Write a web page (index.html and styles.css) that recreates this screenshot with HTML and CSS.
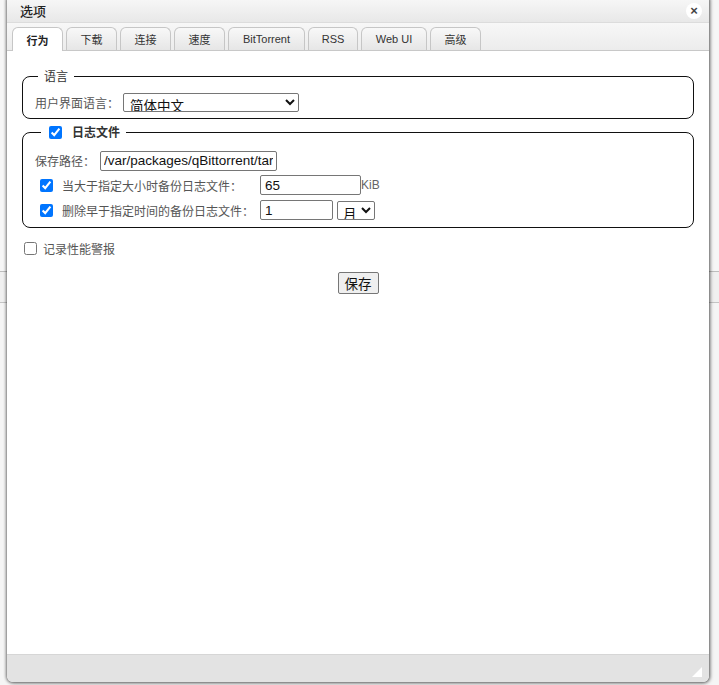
FILE: index.html
```html
<!DOCTYPE html>
<html lang="zh">
<head>
<meta charset="utf-8">
<title>选项</title>
<link rel="stylesheet" href="styles.css">
</head>
<body>
<div class="backdrop">
  <div class="bg-top"></div>
  <div class="bg-band"></div>
  <div class="bg-rest"></div>
</div>
<div class="window">
  <div class="titlebar">
    <span class="title">选项</span>
    <span class="close">×</span>
  </div>
  <div class="tabbar">
    <span class="tab active">行为</span>
    <span class="tab">下载</span>
    <span class="tab">连接</span>
    <span class="tab">速度</span>
    <span class="tab">BitTorrent</span>
    <span class="tab">RSS</span>
    <span class="tab">Web UI</span>
    <span class="tab">高级</span>
  </div>
  <div class="content">
    <fieldset class="group">
      <legend class="legend">语言</legend>
      <div class="row">
        <label class="lbl">用户界面语言：</label>
        <select class="sel-lang"><option>简体中文</option></select>
      </div>
    </fieldset>
    <fieldset class="group group-log">
      <legend class="legend legend-check"><input type="checkbox" checked class="cb"><span class="bold">日志文件</span></legend>
      <div class="row">
        <label class="lbl">保存路径：</label>
        <input class="inp-path" type="text" value="/var/packages/qBittorrent/target/qBittorrent_conf/data/logs">
      </div>
      <div class="row row-sub">
        <input type="checkbox" checked class="cb">
        <label class="lbl lbl-sub">当大于指定大小时备份日志文件：</label>
        <input class="inp-num" type="text" value="65"><span class="unit">KiB</span>
      </div>
      <div class="row row-sub">
        <input type="checkbox" checked class="cb">
        <label class="lbl lbl-sub">删除早于指定时间的备份日志文件：</label>
        <input class="inp-num2" type="text" value="1">
        <select class="sel-month"><option>月</option></select>
      </div>
    </fieldset>
    <div class="perf">
      <input type="checkbox" class="cb cb-perf">
      <label class="lbl">记录性能警报</label>
    </div>
    <div class="actions">
      <button class="save">保存</button>
    </div>
  </div>
  <div class="footer"><span class="grip"></span></div>
</div>
</body>
</html>
```
FILE: styles.css
```css
html, body {
  margin: 0;
  padding: 0;
  width: 719px;
  height: 685px;
  overflow: hidden;
  font-family: "Noto Sans CJK SC", "Liberation Sans", sans-serif;
}
.backdrop {
  width: 719px;
  height: 685px;
  background: #f4f4f4;
}
.bg-top {
  height: 271px;
  background: #f6f6f6;
  border-bottom: 1px solid #bdbdbd;
}
.bg-band {
  height: 30px;
  background: #f0f0f0;
  border-bottom: 1px solid #c4c4c4;
  box-shadow: 0 2px 0 #dcdcdc;
}
.bg-rest {
  height: 382px;
  background: #f5f5f5;
}
.window {
  position: absolute;
  left: 7px;
  top: -6px;
  width: 702px;
  height: 688px;
  background: #fff;
  border-radius: 6px;
  box-shadow: 0 0 3px 1px rgba(0,0,0,0.45), 1px 1px 4px rgba(0,0,0,0.3);
  display: flex;
  flex-direction: column;
  overflow: hidden;
}
.titlebar {
  height: 28px;
  flex: none;
  background: linear-gradient(#fafafa, #e8e8e8);
  display: flex;
  align-items: center;
  justify-content: space-between;
  padding: 4px 8px 0 13px;
  box-sizing: border-box;
}
.title {
  font-size: 13px;
  color: #222;
  font-weight: 500;
}
.close {
  width: 16px;
  height: 16px;
  border-radius: 50%;
  background: #fff;
  color: #444;
  font: bold 13px/16px "Liberation Sans", sans-serif;
  text-align: center;
  margin-top: 1px;
  margin-right: -1px;
}
.tabbar {
  flex: none;
  height: 29px;
  box-sizing: border-box;
  background: linear-gradient(#f7f7f7, #ececec);
  border-top: 1px solid #dcdcdc;
  border-bottom: 1px solid #c8c8c8;
  display: flex;
  align-items: flex-end;
  gap: 3px;
  padding: 0 0 0 5px;
}
.tab {
  height: 23px;
  box-sizing: border-box;
  border: 1px solid #c6c6c6;
  border-bottom: none;
  border-radius: 6px 6px 0 0;
  background: linear-gradient(#f8f8f8, #e6e6e6);
  font-size: 11px;
  color: #333;
  display: flex;
  align-items: center;
  justify-content: center;
  width: 51px;
}
.tab:nth-child(5) { width: 77px; font-family: "Liberation Sans", sans-serif; }
.tab:nth-child(6) { width: 50px; font-family: "Liberation Sans", sans-serif; }
.tab:nth-child(7) { width: 66px; font-family: "Liberation Sans", sans-serif; }
.tab.active {
  background: #fff;
  height: 24px;
  margin-bottom: -1px;
  font-weight: bold;
  color: #222;
}
.content {
  flex: 1;
  padding: 17px 15px 0 15px;
  background: #fff;
}
.group {
  margin: 0 0 5px 0;
  border: 1px solid #111;
  border-radius: 8px;
  padding: 6px 12px 4px 12px;
}
.legend {
  font-size: 12px;
  color: #333;
  padding: 0 6px;
  margin-left: 3px;
  line-height: 16px;
}
.legend-check {
  display: flex;
  align-items: center;
  gap: 10px;
  margin-left: 6px;
  padding: 0 6px 0 8px;
}
.bold { font-weight: bold; color: #333; }
.row {
  display: flex;
  align-items: center;
  height: 20px;
  margin: 2px 0;
}
.group-log { padding-top: 10px; padding-bottom: 2px; }
.group-log .row { height: 21px; margin: 0 0 4px 0; }
.group-log .row-sub { margin: 0 0 5px 0; height: 20px; }
.lbl {
  font-size: 12px;
  color: #555;
}
.cb {
  width: 13px;
  height: 13px;
  margin: 0;
  accent-color: #0075ff;
}
.row-sub .cb { margin-left: 5px; margin-right: 9px; }
.lbl-sub { width: 198px; }
.sel-lang {
  margin-left: 4px;
  width: 176px;
  height: 19px;
  font-size: 13.5px;
  font-family: "Noto Sans CJK SC", sans-serif;
  border: 1px solid #767676;
  border-radius: 2px;
  background: #fff;
  padding: 0 2px;
  color: #111;
}
.inp-path {
  margin-left: 5px;
  width: 177px;
  height: 20px;
  box-sizing: border-box;
  font: 13.5px "Liberation Sans", sans-serif;
  border: 1px solid #767676;
  border-radius: 2px;
  padding: 0 3px;
  color: #111;
}
.inp-num, .inp-num2 {
  width: 101px;
  height: 20px;
  box-sizing: border-box;
  font: 13.5px "Liberation Sans", sans-serif;
  border: 1px solid #767676;
  border-radius: 2px;
  padding: 0 4px;
  color: #111;
}
.inp-num2 { width: 73px; }
.unit {
  font: 12px "Liberation Sans", sans-serif;
  color: #666;
}
.sel-month {
  margin-left: 4px;
  width: 38px;
  height: 19px;
  font-size: 13.5px;
  font-family: "Noto Sans CJK SC", sans-serif;
  border: 1px solid #767676;
  border-radius: 2px;
  background: #fff;
  padding: 0 1px;
  color: #111;
}
.perf {
  display: flex;
  align-items: center;
  gap: 6px;
  margin: 12px 0 0 2px;
}
.cb-perf { margin: 0; }
.actions {
  display: flex;
  justify-content: center;
  margin-top: 15px;
}
.save {
  font-size: 13.5px;
  font-family: "Noto Sans CJK SC", sans-serif;
  padding: 0 6px;
  height: 22px;
  border: 1px solid #767676;
  border-radius: 2px;
  background: #efefef;
  color: #111;
  line-height: 20px;
}
.footer {
  flex: none;
  height: 27px;
  background: #e3e3e3;
  border-top: 1px solid #d6d6d6;
  position: relative;
}
.grip {
  position: absolute;
  right: 7px;
  bottom: 5px;
  width: 0;
  height: 0;
  border-left: 10px solid transparent;
  border-bottom: 10px solid #fff;
}
```
